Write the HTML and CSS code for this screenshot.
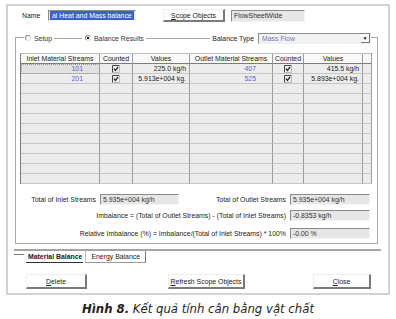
FILE: index.html
```html
<!DOCTYPE html>
<html lang="vi">
<head>
    <meta charset="UTF-8">
    <meta name="viewport" content="width=device-width, initial-scale=1.0">
    <title>Balance</title>
    <link rel="stylesheet" href="styles.css">
</head>
<body>
    <div class="window">
        <!-- tên và phạm vi -->
        <div class="top-row">
            <span class="lbl name-lbl">Name</span>
            <span class="field name-field"><span class="sel">al Heat and Mass balance</span></span>
            <span class="btn scope-btn"><u>S</u>cope Objects</span>
            <span class="field flow-field">FlowSheetWide</span>
        </div>

        <div class="group">
            <div class="group-head">
                <span class="gline gline-start"></span>
                <span class="radio"><i class="dot"></i>Setup</span>
                <span class="gline gline-mid"></span>
                <span class="radio on"><i class="dot"></i>Balance Results</span>
                <span class="gline gline-flex"></span>
                <span class="lbl type-lbl">Balance Type</span>
                <span class="combo"><span class="combo-text">Mass Flow</span><span class="arrow">&#9660;</span></span>
                <span class="gline gline-end"></span>
            </div>

            <div class="group-body">
                <div class="grid">
                    <div class="row head">
                        <div class="cell">Inlet Material Streams</div>
                        <div class="cell">Counted</div>
                        <div class="cell">Values</div>
                        <div class="cell">Outlet Material Streams</div>
                        <div class="cell">Counted</div>
                        <div class="cell">Values</div>
                        <div class="cell"></div>
                    </div>
                    <div class="row">
                        <div class="cell stream focus">101</div>
                        <div class="cell check"><svg width="8" height="8" viewBox="0 0 8 8"><path d="M0.5 7.5V0.5H7.5" fill="none" stroke="#444"/><path d="M7.5 0.5V7.5H0.5" fill="none" stroke="#bbb"/><path d="M2 3.6L3.4 5.4L6.2 1.8" fill="none" stroke="#222" stroke-width="1.2"/></svg></div>
                        <div class="cell val">225.0 kg/h</div>
                        <div class="cell stream">407</div>
                        <div class="cell check"><svg width="8" height="8" viewBox="0 0 8 8"><path d="M0.5 7.5V0.5H7.5" fill="none" stroke="#444"/><path d="M7.5 0.5V7.5H0.5" fill="none" stroke="#bbb"/><path d="M2 3.6L3.4 5.4L6.2 1.8" fill="none" stroke="#222" stroke-width="1.2"/></svg></div>
                        <div class="cell val">415.5 kg/h</div>
                        <div class="cell"></div>
                    </div>
                    <div class="row">
                        <div class="cell stream">201</div>
                        <div class="cell check"><svg width="8" height="8" viewBox="0 0 8 8"><path d="M0.5 7.5V0.5H7.5" fill="none" stroke="#444"/><path d="M7.5 0.5V7.5H0.5" fill="none" stroke="#bbb"/><path d="M2 3.6L3.4 5.4L6.2 1.8" fill="none" stroke="#222" stroke-width="1.2"/></svg></div>
                        <div class="cell val">5.913e+004 kg.</div>
                        <div class="cell stream">525</div>
                        <div class="cell check"><svg width="8" height="8" viewBox="0 0 8 8"><path d="M0.5 7.5V0.5H7.5" fill="none" stroke="#444"/><path d="M7.5 0.5V7.5H0.5" fill="none" stroke="#bbb"/><path d="M2 3.6L3.4 5.4L6.2 1.8" fill="none" stroke="#222" stroke-width="1.2"/></svg></div>
                        <div class="cell val">5.893e+004 kg.</div>
                        <div class="cell"></div>
                    </div>
                    <div class="row"><div class="cell"></div><div class="cell"></div><div class="cell"></div><div class="cell"></div><div class="cell"></div><div class="cell"></div><div class="cell"></div></div>
                    <div class="row"><div class="cell"></div><div class="cell"></div><div class="cell"></div><div class="cell"></div><div class="cell"></div><div class="cell"></div><div class="cell"></div></div>
                    <div class="row"><div class="cell"></div><div class="cell"></div><div class="cell"></div><div class="cell"></div><div class="cell"></div><div class="cell"></div><div class="cell"></div></div>
                    <div class="row"><div class="cell"></div><div class="cell"></div><div class="cell"></div><div class="cell"></div><div class="cell"></div><div class="cell"></div><div class="cell"></div></div>
                    <div class="row"><div class="cell"></div><div class="cell"></div><div class="cell"></div><div class="cell"></div><div class="cell"></div><div class="cell"></div><div class="cell"></div></div>
                    <div class="row"><div class="cell"></div><div class="cell"></div><div class="cell"></div><div class="cell"></div><div class="cell"></div><div class="cell"></div><div class="cell"></div></div>
                    <div class="row"><div class="cell"></div><div class="cell"></div><div class="cell"></div><div class="cell"></div><div class="cell"></div><div class="cell"></div><div class="cell"></div></div>
                    <div class="row"><div class="cell"></div><div class="cell"></div><div class="cell"></div><div class="cell"></div><div class="cell"></div><div class="cell"></div><div class="cell"></div></div>
                    <div class="row"><div class="cell"></div><div class="cell"></div><div class="cell"></div><div class="cell"></div><div class="cell"></div><div class="cell"></div><div class="cell"></div></div>
                    <div class="row"><div class="cell"></div><div class="cell"></div><div class="cell"></div><div class="cell"></div><div class="cell"></div><div class="cell"></div><div class="cell"></div></div>
                </div>

                <!-- tổng dòng vào / ra -->
                <div class="totals">
                    <div class="trow first">
                        <span class="lbl inlet-lbl">Total of Inlet Streams</span>
                        <span class="field tfield-in">5.935e+004 kg/h</span>
                        <span class="lbl grow">Total of Outlet Streams</span>
                        <span class="field tfield">5.935e+004 kg/h</span>
                    </div>
                    <div class="trow second">
                        <span class="lbl grow">Imbalance = (Total of Outlet Streams) - (Total of Inlet Streams)</span>
                        <span class="field tfield">-0.8353 kg/h</span>
                    </div>
                    <div class="trow third">
                        <span class="lbl grow">Relative Imbalance (%) = Imbalance/(Total of Inlet Streams) * 100%</span>
                        <span class="field tfield">-0.00 %</span>
                    </div>
                </div>
            </div>
        </div>

        <div class="tabs">
            <span class="tab-dash"></span>
            <span class="tab active">Material Balance</span>
            <span class="tab">Energy Balance</span>
        </div>

        <div class="buttons">
            <span class="btn delete-btn"><u>D</u>elete</span>
            <span class="btn refresh-btn"><u>R</u>efresh Scope Objects</span>
            <span class="btn close-btn"><u>C</u>lose</span>
        </div>
    </div>

    <p class="caption"><b>Hình 8.</b> Kết quả tính cân bằng vật chất</p>
</body>
</html>
```

FILE: styles.css
```css
body {
    margin: 0;
    background-color: #fff;
    font-family: 'Liberation Sans', Arial, sans-serif;
    font-size: 6.9px;
    color: #333;
}

.window {
    margin: 4px 0 0 6px;
    width: 384px;
    height: 291px;
    border: 2px solid #d2d2d2;
    box-sizing: border-box;
}

.lbl {
    white-space: nowrap;
}

.field {
    display: flex;
    align-items: center;
    background-color: #e6e6e6;
    border-top: 1px solid #8a8a8a;
    border-left: 1px solid #8a8a8a;
    border-right: 1px solid #f4f4f4;
    border-bottom: 1px solid #f4f4f4;
    box-sizing: border-box;
    padding-left: 2px;
    white-space: nowrap;
    overflow: hidden;
}

.btn {
    display: flex;
    align-items: center;
    justify-content: center;
    background-color: #fdfdfd;
    border-top: 1px solid #eee;
    border-left: 1px solid #eee;
    border-right: 2px solid #7a7a7a;
    border-bottom: 2px solid #7a7a7a;
    box-sizing: border-box;
    color: #222;
    white-space: nowrap;
}

/* hàng trên cùng */
.top-row {
    display: flex;
    align-items: center;
    height: 13px;
    margin-top: 3px;
    padding-left: 14px;
}

.name-lbl {
    width: 26px;
    color: #222;
}

.name-field {
    width: 88px;
    height: 11px;
    padding-left: 1px;
}

.name-field .sel {
    background-color: #3a63c8;
    color: #fff;
    padding: 0 2px;
    line-height: 9px;
}

.scope-btn {
    width: 62px;
    height: 13px;
    margin-left: 27px;
}

.flow-field {
    width: 74px;
    height: 12px;
    margin-left: 6px;
}

/* khung nhóm */
.group {
    margin: 10px 0 0 7px;
    width: 363px;
}

.group-head {
    display: flex;
    align-items: center;
    height: 12px;
}

.gline {
    height: 0;
    border-top: 1px solid #a8a8a8;
}

.gline-start,
.gline-end {
    align-self: flex-end;
    height: 6px;
}

.gline-start {
    width: 8px;
    border-left: 1px solid #a8a8a8;
}

.gline-end {
    width: 6px;
    border-right: 1px solid #a8a8a8;
}

.gline-mid {
    width: 28px;
    margin: 0 2px;
}

.gline-flex {
    flex: 1;
    margin: 0 2px;
}

.radio {
    display: flex;
    align-items: center;
    gap: 3px;
    padding-left: 1px;
}

.radio .dot {
    width: 6px;
    height: 6px;
    border-radius: 50%;
    border: 1px solid #888;
    border-right-color: #ddd;
    border-bottom-color: #ddd;
    box-sizing: border-box;
    background: #fff;
}

.radio.on .dot {
    background: radial-gradient(circle, #222 0 1.3px, #fff 1.6px);
}

.type-lbl {
    color: #222;
    margin-right: 4px;
}

.combo {
    display: flex;
    align-items: center;
    width: 113px;
    height: 11px;
    box-sizing: border-box;
    border-top: 1px solid #8a8a8a;
    border-left: 1px solid #8a8a8a;
    border-right: 1px solid #eee;
    border-bottom: 1px solid #eee;
    background-color: #f2f2f2;
}

.combo-text {
    flex: 1;
    padding-left: 3px;
    color: #7272c4;
}

.combo .arrow {
    width: 9px;
    height: 9px;
    display: flex;
    align-items: center;
    justify-content: center;
    font-size: 5px;
    color: #111;
    background-color: #fafafa;
    border-right: 1px solid #777;
    border-bottom: 1px solid #777;
    box-sizing: border-box;
}

.group-body {
    border-left: 1px solid #a8a8a8;
    border-right: 1px solid #a8a8a8;
    border-bottom: 1px solid #a8a8a8;
    height: 200px;
    box-sizing: border-box;
    padding: 9px 6px 0 4px;
}

/* bảng dòng */
.grid {
    width: 352px;
    border-left: 1px solid #777;
    border-top: 1px solid #bbb;
}

.row {
    display: grid;
    grid-template-columns: 79px 33px 57px 83px 31px 59px 9px;
    height: 10px;
}

.cell {
    border-right: 1px solid #9c9c9c;
    border-bottom: 1px solid #c6c6c6;
    background-color: #ececec;
    box-sizing: border-box;
    line-height: 9px;
    white-space: nowrap;
    overflow: hidden;
}

.row.head .cell {
    background-color: #f8f8f8;
    border-bottom: 1px solid #7c7c7c;
    text-align: center;
    color: #222;
}

.cell.stream {
    text-align: right;
    padding-right: 16px;
    color: #6262cc;
}

.cell.focus {
    outline: 1px dotted #999;
    outline-offset: -1px;
    background-color: #e2e2e2;
}

.cell.check {
    display: flex;
    align-items: center;
    justify-content: center;
}

.cell.val {
    text-align: right;
    padding-right: 3px;
    color: #222;
}

/* tổng */
.totals {
    display: flex;
    flex-direction: column;
    padding-right: 1px;
}

.trow {
    display: flex;
    align-items: center;
    gap: 4px;
    height: 11px;
}

.trow.first {
    margin-top: 10px;
}

.trow.second {
    margin-top: 5px;
}

.trow.third {
    margin-top: 7px;
}

.trow .lbl {
    text-align: right;
    color: #222;
}

.inlet-lbl {
    width: 76px;
}

.grow {
    flex: 1;
}

.tfield-in {
    width: 79px;
    height: 11px;
}

.tfield {
    width: 80px;
    height: 11px;
}

/* tab */
.tabs {
    display: flex;
    align-items: flex-start;
    margin: 5px 0 0 6px;
    width: 367px;
    border-top: 2px solid #a4a4a4;
    height: 14px;
}

.tab-dash {
    width: 10px;
    margin-top: 3px;
    border-top: 1px solid #777;
}

.tab {
    display: flex;
    align-items: center;
    height: 11px;
    padding: 0 3px;
    color: #222;
}

.tab.active {
    font-weight: bold;
    border-bottom: 1px solid #333;
    padding: 0 1px 0 2px;
    height: 11px;
    margin-left: 2px;
}

.tab:not(.active) {
    margin-left: 2px;
    border-left: 1px solid #bbb;
    border-right: 1px solid #777;
    border-bottom: 1px solid #999;
    padding: 0 5px;
}

/* nút */
.buttons {
    display: flex;
    margin-top: 9px;
    padding-left: 18px;
}

.buttons .btn {
    height: 15px;
}

.delete-btn {
    width: 61px;
}

.refresh-btn {
    width: 77px;
    margin-left: 81px;
}

.close-btn {
    width: 58px;
    margin-left: 68px;
}

.caption {
    margin: 7px 0 0 0;
    text-align: center;
    font-family: 'Liberation Sans Narrow', 'DejaVu Sans Condensed', 'Liberation Sans', sans-serif;
    font-stretch: condensed;
    font-style: italic;
    font-size: 13px;
    line-height: 14px;
    color: #231f20;
}

.caption b {
    font-weight: bold;
}
```
